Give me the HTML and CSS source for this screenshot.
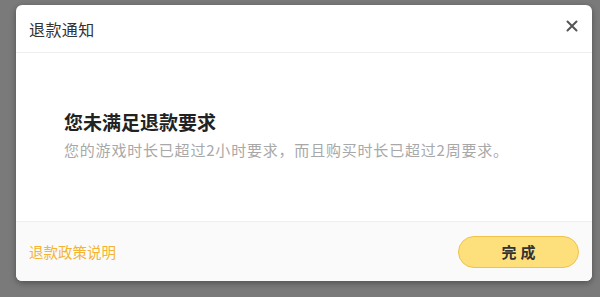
FILE: index.html
```html
<!DOCTYPE html>
<html lang="zh-CN">
<head>
    <meta charset="UTF-8">
    <meta name="viewport" content="width=device-width, initial-scale=1.0">
    <title>退款通知</title>
    <link rel="stylesheet" href="styles.css">
</head>
<body>
    <div class="dialog">
        <div class="dialog-header">
            <span class="dialog-title">退款通知</span>
            <button class="close-btn" aria-label="关闭">
                <svg viewBox="0 0 12 12" width="12" height="12">
                    <path d="M1.5 1.5L10.5 10.5M10.5 1.5L1.5 10.5" stroke="currentColor" stroke-width="2" stroke-linecap="round"></path>
                </svg>
            </button>
        </div>

        <div class="dialog-body">
            <h2>您未满足退款要求</h2>
            <p>您的游戏时长已超过2小时要求，而且购买时长已超过2周要求。</p>
        </div>

        <div class="dialog-footer">
            <a class="policy-link" href="#">退款政策说明</a>
            <button class="done-btn">完成</button>
        </div>
    </div>
</body>
</html>
```

FILE: styles.css
```css
* {
    margin: 0;
    padding: 0;
    box-sizing: border-box;
}

body {
    font-family: "Noto Sans CJK SC", "Noto Sans", sans-serif;
    background-color: #7a7a7a;
    color: #333;
    height: 297px;
    overflow: hidden;
    padding: 5px 8px 0 16px;
}

.dialog {
    width: 576px;
    height: 276px;
    background: white;
    border-radius: 6px;
    box-shadow: 0 2px 6px rgba(0, 0, 0, 0.35);
    display: flex;
    flex-direction: column;
    overflow: hidden;
}

/* Header */
.dialog-header {
    height: 48px;
    border-bottom: 1px solid #eeeeee;
    display: flex;
    align-items: center;
    justify-content: space-between;
    padding: 0 14px 0 13px;
}

.dialog-title {
    font-size: 16px;
    color: #333;
    letter-spacing: 0.4px;
}

.close-btn {
    border: none;
    background: none;
    color: #555;
    width: 12px;
    height: 12px;
    display: flex;
    cursor: pointer;
    margin-top: -5px;
}

/* Body */
.dialog-body {
    flex: 1;
    display: flex;
    flex-direction: column;
    justify-content: center;
    padding: 0 40px 2px 48px;
}

.dialog-body h2 {
    font-size: 19px;
    font-weight: 700;
    color: #222;
    line-height: 26px;
    margin-top: -2px;
}

.dialog-body p {
    font-size: 15px;
    color: #a8a8a8;
    line-height: 22px;
    margin-top: 4px;
    letter-spacing: 0.8px;
}

/* Footer */
.dialog-footer {
    height: 60px;
    background: #fafafa;
    border-top: 1px solid #eeeeee;
    display: flex;
    align-items: center;
    justify-content: space-between;
    padding: 0 13px;
}

.policy-link {
    font-size: 14.5px;
    color: #f5b332;
    text-decoration: none;
}

.done-btn {
    width: 121px;
    height: 32px;
    border-radius: 16px;
    border: 1px solid #efc24a;
    background: #fde07c;
    color: #333;
    font-family: inherit;
    font-size: 15px;
    font-weight: 700;
    letter-spacing: 4px;
    text-indent: 4px;
    cursor: pointer;
}
```
